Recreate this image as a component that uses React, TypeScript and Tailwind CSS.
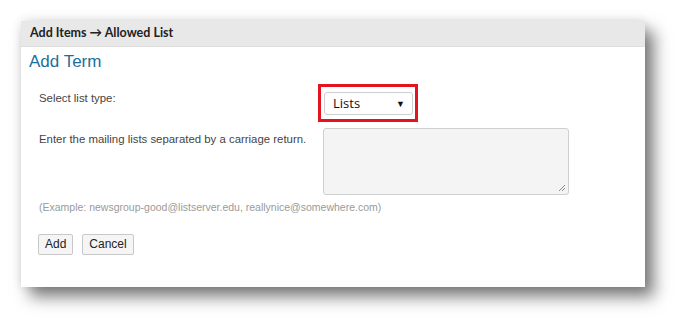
import React from "react";

export default function App() {
  return (
    <div className="w-[687px] h-[329px] bg-white pt-[21px] pl-[21px]" style={{ fontFamily: '"Liberation Sans", Arial, sans-serif' }}>
      <div className="w-[624px] h-[266px] bg-white flex flex-col shadow-[0_0_10px_rgba(0,0,0,0.12),9px_10px_15px_rgba(0,0,0,0.5)]">
        <div className="h-[26px] bg-[#e8e8e8] border-b border-[#dedede] flex items-center pl-[9px] text-[12.5px] font-bold text-[#222]" style={{ fontFamily: 'Lato, "Liberation Sans", sans-serif' }}>
          Add Items → Allowed List
        </div>
        <div className="pl-[8px] pt-[4px] text-[17px] leading-[22px] text-[#1b6f9c]">Add Term</div>
        <div className="grid grid-cols-[279px_auto] pl-[18px] mt-[11px] text-[11.4px] text-[#444]">
          <div className="pt-[6px]">Select list type:</div>
          <div>
            <div className="w-[100px] h-[38px] border-[3px] border-[#e3141e] pt-[5px] pl-[3px]">
              <div className="w-[89px] h-[23px] border border-[#cfcfcf] rounded-[3px] bg-white flex items-center justify-between pl-[8px] pr-[7px] text-[13px] text-[#111]" style={{ fontFamily: '"Open Sans", "Noto Sans", sans-serif' }}>
                <span>Lists</span>
                <span className="text-[9px]">▼</span>
              </div>
            </div>
          </div>
          <div className="pt-[3px] mt-[6px]">Enter the mailing lists separated by a carriage return.</div>
          <div className="mt-[6px] pl-[5px]">
            <div className="relative w-[246px] h-[67px] bg-[#f4f4f4] border border-[#cfcfcf] rounded-[3px]">
              <svg className="absolute right-[2px] bottom-[2px]" width="8" height="8" viewBox="0 0 8 8">
                <path d="M7 1 L1 7 M7 4 L4 7" stroke="#888" strokeWidth="1" />
              </svg>
            </div>
          </div>
        </div>
        <div className="pl-[18px] mt-[5px] text-[10.5px] text-[#9a9a9a]">(Example: newsgroup-good@listserver.edu, reallynice@somewhere.com)</div>
        <div className="pl-[17px] mt-[18px] flex gap-[9px] text-[12px] text-[#222]">
          <div className="h-[21px] px-[6px] border border-[#c8c8c8] rounded-[2px] bg-[#f5f5f5] flex items-center">Add</div>
          <div className="h-[21px] px-[6px] border border-[#c8c8c8] rounded-[2px] bg-[#f5f5f5] flex items-center">Cancel</div>
        </div>
      </div>
    </div>
  );
}
